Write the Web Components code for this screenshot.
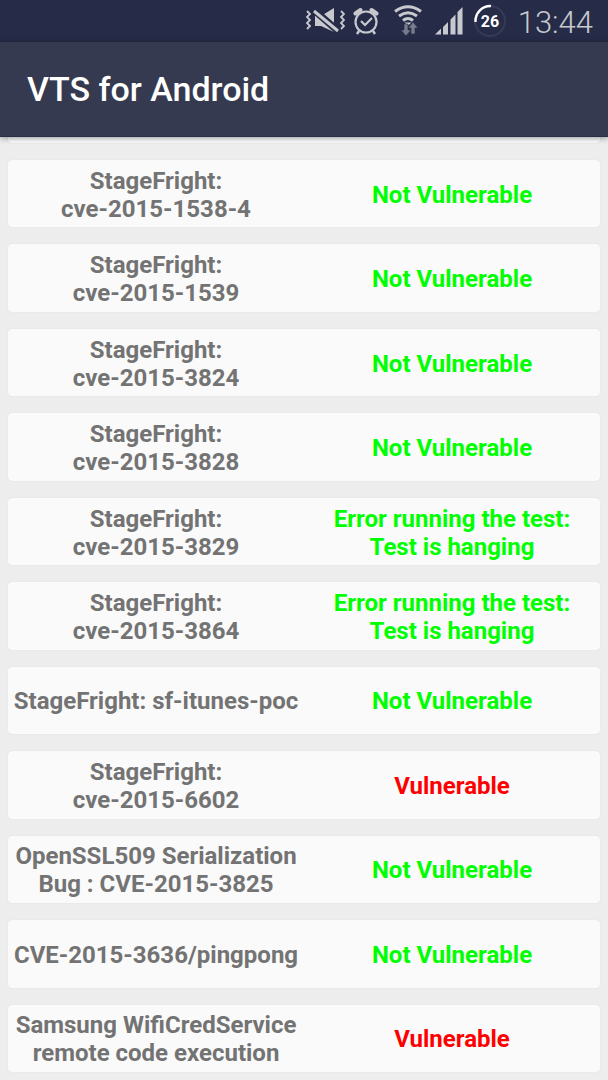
<!DOCTYPE html>
<html lang="en">
<head>
<meta charset="utf-8">
<meta name="viewport" content="width=device-width, initial-scale=1">
<title>VTS for Android</title>
<style>
html, body { margin: 0; }
body { background: #ededed; font-family: Roboto, "Liberation Sans", sans-serif; }
</style>
</head>
<body>
<vts-app></vts-app>

<template id="status-bar">
<style>
:host { display: flex; align-items: center; justify-content: flex-end; height: 42px; padding-right: 15px; background: #262b48; color: #c8c9ce; }
svg { display: block; flex: none; }
time { margin-left: 11px; font-size: 31px; line-height: 42px; font-weight: 300; padding-top: 4px; }
.alarm { margin-left: 8px; }
.wifi { margin-left: 14px; }
.signal { margin-left: 12px; }
.battery { margin-left: 10px; }
</style>
<svg class="mute" width="40" height="42" viewBox="305 0 40 42" fill="none" stroke="#c8c9ce" stroke-width="2">
<path d="M307 11l3 3-3 3 3 3-3 3 3 3-3 3M341 11l3 3-3 3 3 3-3 3 3 3-3 3" stroke-width="1.800"/>
<path d="M315 16h6l13-8v24l-13-6h-6z" fill="#c8c9ce" stroke="none"/>
<path d="M314 10l24 21" stroke="#262b48" stroke-width="7"/>
<path d="M314 11l24 20" stroke-width="3"/>
</svg>
<svg class="alarm" width="26" height="42" viewBox="353 0 26 42" fill="none" stroke="#c8c9ce">
<circle cx="366" cy="22" r="10.500" stroke-width="2.200"/>
<path d="M355.500 13.500l5-3.500M376.500 13.500l-5-3.500" stroke-width="4" stroke-linecap="round"/>
<path d="M361 21l4 4 7-7" stroke-width="2.200"/>
<path d="M359 31l-2 3M373 31l2 3" stroke-width="2.500"/>
</svg>
<svg class="wifi" width="30" height="42" viewBox="393 0 30 42" fill="none" stroke="#c8c9ce" stroke-width="3">
<path d="M395 11.500q13-9.500 26 0M399 16q9-6.500 18 0M403 20.500q5-4 10 0"/>
<path d="M404.500 22.500h7l-3.500 3z" fill="#c8c9ce" stroke="none"/>
<path d="M404 24h4v6h3l-5 6-5-6h3zM411 34h4v-6h3l-5-6-5 6h3z" fill="#777b8b" stroke="#262b48" stroke-width=".6"/>
</svg>
<svg class="signal" width="28" height="42" viewBox="435 0 28 42" fill="#c8c9ce">
<path d="M435 34.500l6-6v6zM443 27l5-5v12.500h-5zM450.500 19.500l5-5v20h-5zM457.500 12l5-5v27.500h-5z"/>
</svg>
<svg class="battery" width="34" height="42" viewBox="473 0 34 42" fill="none">
<circle cx="490" cy="21" r="15" stroke="#363b56" stroke-width="2"/>
<path d="M475.500 22A15 15 0 0 1 491 6" stroke="#fff" stroke-width="2.400"/>
<text x="490" y="27" text-anchor="middle" font-size="16" font-weight="700" fill="#fff">26</text>
</svg>
<time>13:44</time>
</template>

<template id="app-bar">
<style>
:host { display: block; background: #353a50; border-bottom: 1px solid #292e45; box-shadow: 0 1px 6px rgba(0,0,0,.4); color: #fff; }
h1 { margin: 0; padding: 25px 27px; font-size: 34px; line-height: 44px; font-weight: 500; }
</style>
<h1><slot></slot></h1>
</template>

<template id="test-card">
<style>
:host { display: grid; grid-template-columns: 1fr 1fr; align-items: center; min-height: 58px; box-sizing: border-box; padding-top: 2px; border-radius: 4px; background: #fafafa; box-shadow: 0 0 1px rgba(0,0,0,.14); color: #737373; font-size: 24px; line-height: 28px; font-weight: 700; text-align: center; }
:host([result="pass"]) .result { color: #0f0; }
:host([result="fail"]) .result { color: #f00; }
</style>
<div class="name"><slot></slot></div>
<div class="result"><slot name="result"></slot></div>
</template>

<template id="vts-app">
<style>
:host { display: flex; flex-direction: column; min-height: 100vh; }
header { position: sticky; top: 0; z-index: 1; }
main { flex: 1; display: grid; grid-template-rows: 6px; grid-auto-rows: 1fr; row-gap: 17px; padding: 0 8px 8px; }
.previous { background: #fafafa; border-radius: 0 0 4px 4px; box-shadow: 0 0 1px rgba(0,0,0,.14); }
</style>
<header>
<status-bar></status-bar>
<app-bar>VTS for Android</app-bar>
</header>
<main><div class="previous"></div></main>
</template>

<script>
function define(name, setup) {
  customElements.define(name, class extends HTMLElement {
    constructor() {
      super();
      const root = this.attachShadow({ mode: "open" });
      root.append(document.getElementById(name).content.cloneNode(true));
      if (setup) setup(root);
    }
  });
}

const safe = "Not Vulnerable";
const hanging = "Error running the test:\nTest is hanging";
const tests = [
  ["StageFright:\ncve-2015-1538-4", safe],
  ["StageFright:\ncve-2015-1539", safe],
  ["StageFright:\ncve-2015-3824", safe],
  ["StageFright:\ncve-2015-3828", safe],
  ["StageFright:\ncve-2015-3829", hanging],
  ["StageFright:\ncve-2015-3864", hanging],
  ["StageFright: sf-itunes-poc", safe],
  ["StageFright:\ncve-2015-6602", "Vulnerable"],
  ["OpenSSL509 Serialization\nBug : CVE-2015-3825", safe],
  ["CVE-2015-3636/pingpong", safe],
  ["Samsung WifiCredService\nremote code execution", "Vulnerable"]
];

function lines(text) {
  const span = document.createElement("span");
  span.style.whiteSpace = "pre-line";
  span.textContent = text;
  return span;
}

define("status-bar");
define("app-bar");
define("test-card");
define("vts-app", root => {
  const main = root.querySelector("main");
  for (const [name, result] of tests) {
    const card = document.createElement("test-card");
    card.setAttribute("result", result === "Vulnerable" ? "fail" : "pass");
    const outcome = lines(result);
    outcome.slot = "result";
    card.append(lines(name), outcome);
    main.append(card);
  }
});
</script>
</body>
</html>
